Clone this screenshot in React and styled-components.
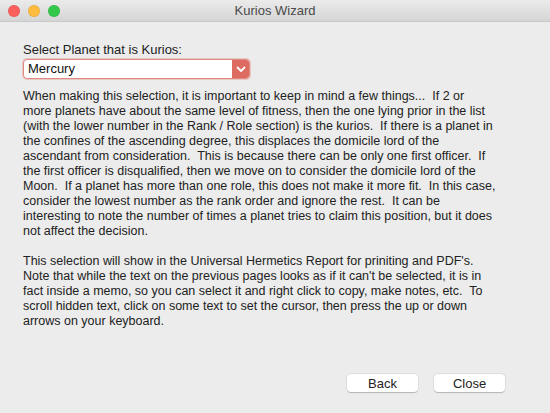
import React from 'react'
import styled, { createGlobalStyle } from 'styled-components'

const GlobalStyle = createGlobalStyle`
    html, body {
        margin: 0;
        padding: 0;
        background: #ececec;
    }
    body {
        font-family: "Liberation Sans", Arial, sans-serif;
    }
`

const paragraphs = [
    [
        'When making this selection, it is important to keep in mind a few things...  If 2 or',
        'more planets have about the same level of fitness, then the one lying prior in the list',
        '(with the lower number in the Rank / Role section) is the kurios.  If there is a planet in',
        'the confines of the ascending degree, this displaces the domicile lord of the',
        'ascendant from consideration.  This is because there can be only one first officer.  If',
        'the first officer is disqualified, then we move on to consider the domicile lord of the',
        'Moon.  If a planet has more than one role, this does not make it more fit.  In this case,',
        'consider the lowest number as the rank order and ignore the rest.  It can be',
        'interesting to note the number of times a planet tries to claim this position, but it does',
        'not affect the decision.',
    ],
    [
        "This selection will show in the Universal Hermetics Report for priniting and PDF's.",
        "Note that while the text on the previous pages looks as if it can't be selected, it is in",
        'fact inside a memo, so you can select it and right click to copy, make notes, etc.  To',
        'scroll hidden text, click on some text to set the cursor, then press the up or down',
        'arrows on your keyboard.',
    ],
]

const lights = ['#fc605c', '#fdbc40', '#34c84a']

export default function App() {
    return (
        <>
            <GlobalStyle />
            <Window>
                <TitleBar>
                    <Lights>
                        {lights.map((c) => (
                            <Light key={c} color={c} />
                        ))}
                    </Lights>
                    <Title>Kurios Wizard</Title>
                </TitleBar>
                <Content>
                    <Label>Select Planet that is Kurios:</Label>
                    <Select>
                        <SelectValue>Mercury</SelectValue>
                        <SelectArrow>
                            <svg width="10" height="7" viewBox="0 0 10 7">
                                <path d="M1.5 1.5 L5 5 L8.5 1.5" fill="none" stroke="#fff" strokeWidth="1.8" strokeLinecap="round" strokeLinejoin="round" />
                            </svg>
                        </SelectArrow>
                    </Select>
                    <Memo>
                        {paragraphs.map((lines, i) => (
                            <Paragraph key={i}>
                                {lines.map((l, j) => (
                                    <Line key={j}>{l}</Line>
                                ))}
                            </Paragraph>
                        ))}
                    </Memo>
                </Content>
                <Footer>
                    <Button>Back</Button>
                    <Button>Close</Button>
                </Footer>
            </Window>
        </>
    )
}

const Window = styled.div`
    width: 550px;
    height: 413px;
    display: flex;
    flex-direction: column;
    background: #ececec;
    overflow: hidden;
`

const TitleBar = styled.div`
    height: 22px;
    flex: 0 0 22px;
    position: relative;
    display: flex;
    align-items: center;
    justify-content: center;
    background: linear-gradient(#ebebeb, #d5d5d5);
    border-bottom: 1px solid #c8c8c8;
    box-sizing: border-box;
`

const Lights = styled.div`
    position: absolute;
    left: 8px;
    top: 5px;
    display: flex;
    gap: 8px;
`

const Light = styled.span`
    width: 12px;
    height: 12px;
    border-radius: 50%;
    background: ${({ color }) => color};
    box-shadow: inset 0 0 0 0.5px rgba(0, 0, 0, 0.12);
`

const Title = styled.div`
    font-size: 13px;
    color: #4a4a4a;
`

const Content = styled.div`
    flex: 1;
    padding: 20px 0 0 23px;
    color: #222;
    font-size: 12.5px;
`

const Label = styled.div`
    font-size: 13px;
    line-height: 16px;
`

const Select = styled.div`
    width: 227px;
    height: 20px;
    margin-top: 1px;
    display: flex;
    box-sizing: border-box;
    border: 1px solid #e08b82;
    border-radius: 4px;
    background: #fff;
    box-shadow: 0 0 0 1px rgba(224, 130, 120, 0.35);
    overflow: hidden;
`

const SelectValue = styled.div`
    flex: 1;
    padding-left: 4px;
    font-size: 13px;
    line-height: 18px;
    color: #111;
`

const SelectArrow = styled.div`
    width: 17px;
    display: flex;
    align-items: center;
    justify-content: center;
    background: #dd6b62;
`

const Memo = styled.div`
    margin-top: 10px;
    display: flex;
    flex-direction: column;
    gap: 15px;
`

const Paragraph = styled.div`
    display: flex;
    flex-direction: column;
`

const Line = styled.div`
    line-height: 15px;
    white-space: pre;
`

const Footer = styled.div`
    display: flex;
    justify-content: flex-end;
    gap: 16px;
    padding: 0 45px 21px 0;
`

const Button = styled.button`
    width: 71px;
    height: 18px;
    padding: 0;
    border: none;
    border-radius: 4px;
    background: #fff;
    box-shadow: 0 0.5px 1px rgba(0, 0, 0, 0.2), 0 0 0 0.5px rgba(0, 0, 0, 0.08);
    font-family: "Liberation Sans", Arial, sans-serif;
    font-size: 13px;
    color: #222;
`
